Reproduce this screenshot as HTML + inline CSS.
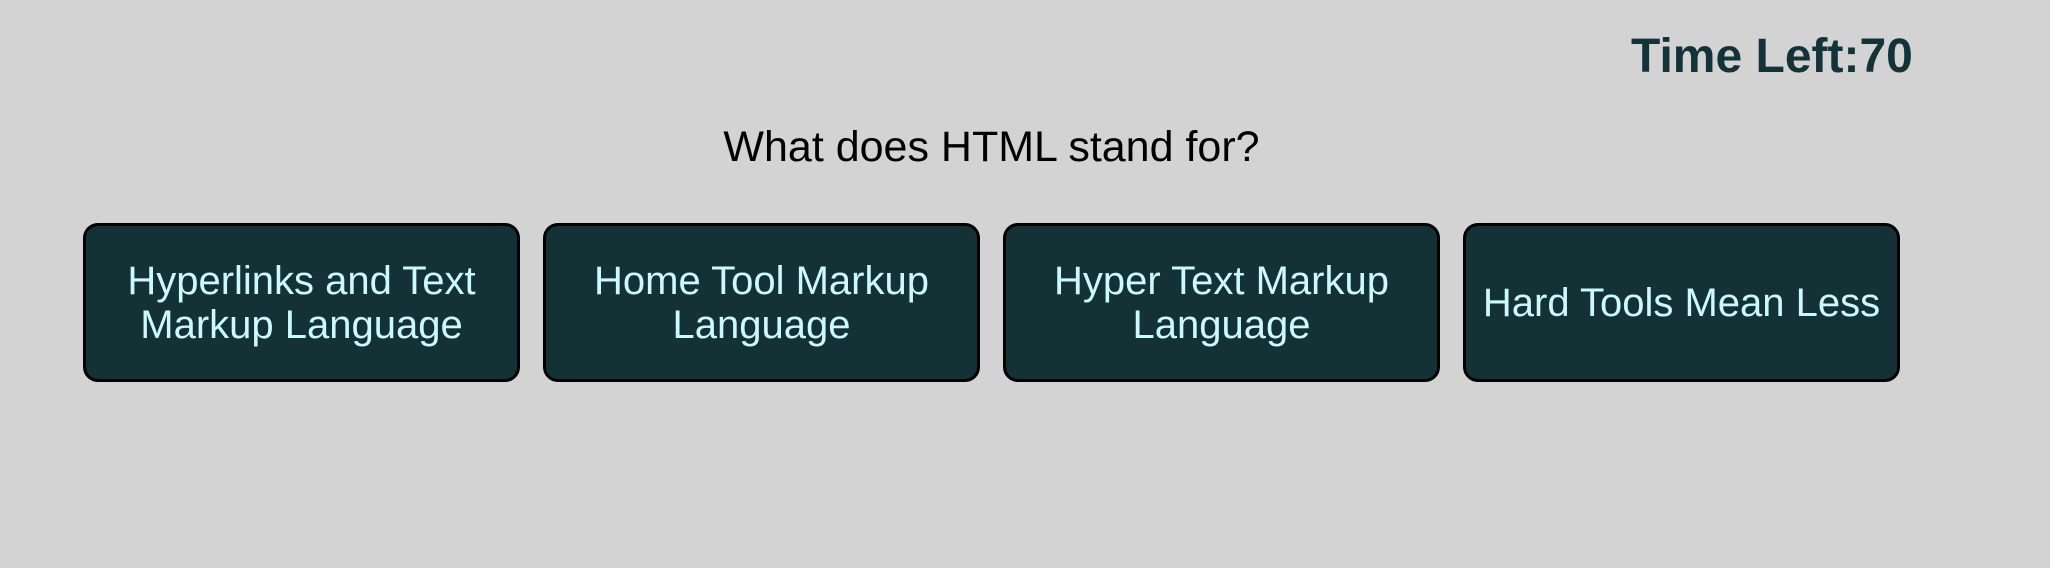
<!DOCTYPE html>
<html><head><style>
html,body{margin:0;padding:0;width:2050px;height:568px;background:#d3d3d3;overflow:hidden;font-family:"Liberation Sans",Arial,sans-serif;}
.t{position:absolute;left:1631px;top:29px;font-size:48px;font-weight:bold;color:#143338;white-space:nowrap;}
.q{position:absolute;left:0;width:1983px;top:123px;text-align:center;font-size:43px;color:#000;}
.b{position:absolute;top:223px;width:431px;height:153px;background:#143235;border:3.5px solid #000;border-radius:15px;color:#ccfafa;font-size:40px;line-height:44px;display:flex;align-items:center;justify-content:center;text-align:center;}
</style></head><body>
<div class="t">Time Left:70</div>
<div class="q">What does HTML stand for?</div>
<div class="b" style="left:83px">Hyperlinks and Text<br>Markup Language</div>
<div class="b" style="left:543px">Home Tool Markup<br>Language</div>
<div class="b" style="left:1003px">Hyper Text Markup<br>Language</div>
<div class="b" style="left:1463px">Hard Tools Mean Less</div>
</body></html>
